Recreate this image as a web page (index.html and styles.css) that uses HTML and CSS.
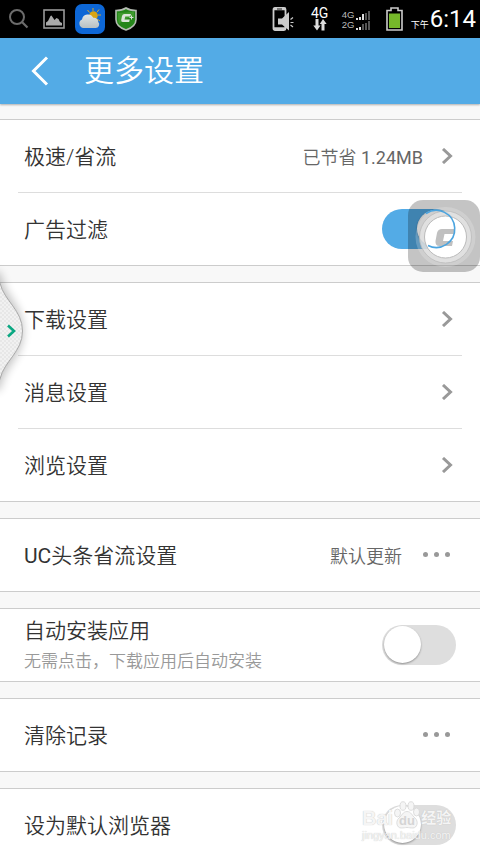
FILE: index.html
```html
<!DOCTYPE html>
<html lang="zh-CN">
<head>
    <meta charset="UTF-8">
    <meta name="viewport" content="width=device-width, initial-scale=1.0">
    <title>更多设置</title>
    <link rel="stylesheet" href="styles.css">
</head>
<body>
    <div class="status_bar">
        <div class="status_left">
            <svg class="icon_search" width="20" height="20" viewBox="0 0 20 20">
                <circle cx="8" cy="8" r="7" fill="none" stroke="#6c6c6c" stroke-width="2"/>
                <path d="M13 13l5.500 5.500" stroke="#6c6c6c" stroke-width="2.200"/>
            </svg>
            <svg class="icon_image" width="22" height="20" viewBox="0 0 22 20">
                <rect x="1" y="1" width="20" height="18" fill="none" stroke="#999" stroke-width="1.600"/>
                <path d="M3 16.500v-3l2-1.500 2.500-5 1-.5 3 4.500 2-2 2 1 1.500 3 2 1v2.500z" fill="#aaa"/>
            </svg>
            <svg class="icon_weather" width="30" height="30" viewBox="0 0 30 30">
                <defs>
                    <linearGradient id="cloud" x1="0" y1="0" x2="0" y2="1">
                        <stop offset="0" stop-color="#e0e6e6"/>
                        <stop offset="1" stop-color="#b8c0c2"/>
                    </linearGradient>
                </defs>
                <rect width="30" height="30" rx="7" fill="#0d67d6"/>
                <path d="M18 4v3M12.500 6l2 2.500M24 5.500l-1.800 2.500M23 11h3M22 15l3 2" stroke="#d9a52a" stroke-width="1"/>
                <circle cx="18.500" cy="11.500" r="4.300" fill="#d9a514"/>
                <path d="M8 24a4.500 4.500 0 0 1-1-8.500 6 6 0 0 1 11.300-1.700 4.200 4.200 0 0 1 5 4.200 3.600 3.600 0 0 1-2.800 6z" fill="url(#cloud)"/>
            </svg>
            <svg class="icon_shield" width="22" height="24" viewBox="0 0 22 24">
                <path d="M11 1c3 2 6 2.500 10 2.500v9c0 5-4 8.500-10 10.500-6-2-10-5.500-10-10.500v-9c4 0 7-.5 10-2.500z" fill="#25861a" stroke="#b5bcb3" stroke-width="1.600"/>
                <path d="M3 6c4 0 12-1 16-1v5c-6 0-11 3-15 7-1-3-1-7-1-11z" fill="#65b94c" opacity=".4"/>
                <path d="M16 7H9.500Q7.500 7 7 9l-.8 4q-.3 2 1.500 2h6.500l.6-2.500H9.500L10.300 9.500h5z" fill="#dbe4d9"/>
                <path d="M16.500 8.500v4M14.500 10.500h4" stroke="#d7e3d4" stroke-width="1"/>
            </svg>
        </div>
        <div class="status_right">
            <svg class="icon_mute" width="23" height="24" viewBox="0 0 23 24">
                <rect x="1.500" y="1" width="12" height="22" rx="1.500" fill="none" stroke="#ccc" stroke-width="1.800"/>
                <path d="M1.500 2h12M1.500 21.500h12" stroke="#ccc" stroke-width="2.500"/>
                <path d="M5 2h5" stroke="#222" stroke-width="1"/>
                <path d="M6 11.500h4l7-6.500v18.500l-7-6H6z" fill="#ccc"/>
                <path d="M18.500 12.500l2.500-2M18.500 15.500h3M18.500 18l2.500 2" stroke="#ccc" stroke-width="1.200"/>
            </svg>
            <div class="network">
                <span>4G</span>
                <svg width="14" height="12" viewBox="0 0 14 12">
                    <path d="M2.500 0h3v6.500h2L4 11.500.3 6.500h2.200zM8.500 11.500h3V5h2.200L10 0 6.800 5h1.700z" fill="#ddd"/>
                </svg>
            </div>
            <div class="signals">
                <div class="signal">
                    <span>4G</span>
                    <svg width="14" height="9" viewBox="0 0 14 9">
                        <path d="M0 7h2v2H0zM3 6h2v3H3zM6 3h2v6H6z" fill="#ddd"/>
                        <path d="M9 2h2v7H9zM12 0h2v9h-2z" fill="#555"/>
                    </svg>
                </div>
                <div class="signal">
                    <span>2G</span>
                    <svg width="14" height="9" viewBox="0 0 14 9">
                        <path d="M0 7h2v2H0zM3 6h2v3H3z" fill="#ddd"/>
                        <path d="M6 3h2v6H6zM9 2h2v7H9zM12 0h2v9h-2z" fill="#555"/>
                    </svg>
                </div>
            </div>
            <svg class="icon_battery" width="17" height="24" viewBox="0 0 17 24">
                <path d="M5 3.500V1h7v2.500h4V23H1V3.500z" fill="#000" stroke="#ccc" stroke-width="1.600"/>
                <rect x="3" y="6.500" width="11" height="14.500" fill="#76b82a"/>
            </svg>
            <span class="period">下午</span>
            <span class="clock">6:14</span>
        </div>
    </div>

    <header class="header">
        <svg width="18" height="30" viewBox="0 0 18 30">
            <path d="M16 1.500L2.500 15 16 28.500" fill="none" stroke="#fff" stroke-width="3"/>
        </svg>
        <h1>更多设置</h1>
    </header>

    <main class="settings">
        <section class="group">
            <div class="row">
                <span class="label">极速/省流</span>
                <span class="value">已节省 <span class="latin">1.24MB</span></span>
                <svg class="arrow" width="12" height="16" viewBox="0 0 12 16"><path d="M2 1l7.500 7L2 15"/></svg>
            </div>
            <div class="row">
                <span class="label">广告过滤</span>
                <span class="switch on"></span>
            </div>
        </section>
        <section class="group">
            <div class="row">
                <span class="label">下载设置</span>
                <svg class="arrow" width="12" height="16" viewBox="0 0 12 16"><path d="M2 1l7.500 7L2 15"/></svg>
            </div>
            <div class="row">
                <span class="label">消息设置</span>
                <svg class="arrow" width="12" height="16" viewBox="0 0 12 16"><path d="M2 1l7.500 7L2 15"/></svg>
            </div>
            <div class="row">
                <span class="label">浏览设置</span>
                <svg class="arrow" width="12" height="16" viewBox="0 0 12 16"><path d="M2 1l7.500 7L2 15"/></svg>
            </div>
        </section>
        <section class="group">
            <div class="row">
                <span class="label"><span class="latin">UC</span>头条省流设置</span>
                <span class="value">默认更新</span>
                <span class="dots"><i></i><i></i><i></i></span>
            </div>
        </section>
        <section class="group">
            <div class="row">
                <div class="label">
                    <p>自动安装应用</p>
                    <p class="hint">无需点击，下载应用后自动安装</p>
                </div>
                <span class="switch"></span>
            </div>
        </section>
        <section class="group">
            <div class="row">
                <span class="label">清除记录</span>
                <span class="dots"><i></i><i></i><i></i></span>
            </div>
        </section>
        <section class="group">
            <div class="row">
                <span class="label">设为默认浏览器</span>
                <span class="switch"></span>
            </div>
        </section>
    </main>

    <!-- side drawer handle -->
    <svg class="drawer" width="48" height="150" viewBox="0 0 48 150">
        <defs>
            <pattern id="weave" width="4" height="4" patternUnits="userSpaceOnUse">
                <rect width="4" height="4" fill="#f1f1f1"/>
                <path d="M0 0h2v2H0zM2 2h2v2H2z" fill="#e7e7e7"/>
            </pattern>
            <filter id="soft" x="-50%" y="-20%" width="200%" height="140%">
                <feGaussianBlur stdDeviation="5"/>
            </filter>
        </defs>
        <path d="M-10 12H0C3 36 23 44 23 71S3 106 0 130h-10z" fill="#000" opacity=".24" filter="url(#soft)"/>
        <path d="M-2 18L0 23C4 41 22.500 50 22.500 71S4 101 0 119l-2 5z" fill="url(#weave)" stroke="#aaa" stroke-width="1"/>
        <path d="M8 65.500l6 5.500-6 5.500" fill="none" stroke="#0aa882" stroke-width="2.600"/>
    </svg>

    <!-- floating assistant button -->
    <svg class="float_ball" width="72" height="72" viewBox="0 0 72 72">
        <rect width="72" height="72" rx="15" fill="#000" opacity=".23"/>
        <circle cx="37.500" cy="37" r="30" fill="#fff" opacity=".2"/>
        <circle cx="37.500" cy="37" r="26" fill="#e4e4e4" fill-opacity=".8" stroke="#bbb" stroke-width=".8"/>
        <circle cx="37.500" cy="37" r="21" fill="#fff" stroke="#bbb" stroke-width="1"/>
        <path d="M47 29H34q-4 0-5 4l-1.500 8q-.5 5 4 5H44l1-5H35l1.500-7H46z" fill="#c0c0c0"/>
        <path d="M18 13.500A18.500 18.500 0 1 1 20 45.500" fill="none" stroke="#4ba4df" stroke-width="1.600"/>
    </svg>

    <div class="watermark">
        <div class="mark_name">
            <span>Bai</span>
            <svg width="28" height="28" viewBox="0 0 28 28">
                <g fill="#f5f5f5" stroke="#d5d5d5" stroke-width=".8">
                    <ellipse cx="4.500" cy="12" rx="3" ry="4"/>
                    <ellipse cx="10" cy="5" rx="3" ry="4.300"/>
                    <ellipse cx="18" cy="5" rx="3" ry="4.300"/>
                    <ellipse cx="23.500" cy="11" rx="3" ry="4"/>
                    <path d="M14 10.500c4 0 5 4 8 6.500 4 3.500 2 10-2 10-3 0-4-.5-6-.5s-3 .5-6 .5c-4 0-6-6.500-2-10C9 14.500 10 10.500 14 10.500z"/>
                </g>
                <text x="14" y="24" text-anchor="middle">du</text>
            </svg>
            <span class="mark_cn">经验</span>
        </div>
        <div class="mark_url">jingyan.baidu.com</div>
    </div>
</body>
</html>
```
FILE: styles.css
```css
* {
    margin: 0;
    padding: 0;
    box-sizing: border-box;
}
body {
    position: relative;
    width: 480px;
    height: 854px;
    overflow: hidden;
    background: #f8f8f8;
    color: #333;
    font-family: Roboto, "Noto Sans CJK SC", sans-serif;
}
svg {
    display: block;
    flex-shrink: 0;
}
.status_bar {
    display: flex;
    justify-content: space-between;
    height: 38px;
    padding: 0 5px 0 9px;
    background: #000;
    color: #fff;
}
.status_left, .status_right {
    display: flex;
    align-items: center;
}
.icon_image {
    margin-left: 14px;
}
.icon_weather {
    margin-left: 10px;
}
.icon_shield {
    margin-left: 10px;
}
.network {
    display: flex;
    flex-direction: column;
    align-items: center;
    width: 20px;
    margin-left: 15px;
    font-size: 14px;
    line-height: 12px;
}
.signals {
    margin-left: 12px;
    margin-right: -1px;
    margin-top: 2px;
    font-family: "Liberation Sans", sans-serif;
    font-size: 9.5px;
    line-height: 10px;
    color: #bbb;
}
.signal {
    display: flex;
    align-items: center;
}
.signal span {
    width: 14px;
}
.icon_battery {
    margin-left: 17px;
}
.period {
    margin: 10px 1px 0 8px;
    font-size: 9px;
}
.clock {
    font-size: 24px;
    line-height: 38px;
    margin-right: -1px;
}
.header {
    display: flex;
    align-items: center;
    height: 66px;
    padding-left: 31px;
    background: #53abe6;
    box-shadow: 0 1px 2px rgba(0, 0, 0, 0.3);
    color: #fff;
}
.header h1 {
    margin-left: 35px;
    font-size: 30px;
    font-weight: 350;
    line-height: 60px;
}
.settings {
    padding-top: 15px;
}
.group {
    margin-bottom: 16px;
    padding: 0 18px;
    background: #fff;
    border-top: 1px solid #ccc;
    border-bottom: 1px solid #ccc;
}
.row {
    display: flex;
    align-items: center;
    height: 72px;
    padding: 0 6px;
}
.row + .row {
    height: 73px;
    border-top: 1px solid #ddd;
}
.label {
    flex: 1;
    padding-top: 1px;
    font-size: 21px;
    font-weight: 350;
    line-height: 30px;
}
.hint {
    font-size: 17px;
    color: #999;
}
.value {
    font-size: 18px;
    font-weight: 350;
    color: #666;
}
.latin {
    font-weight: 400;
}
.arrow {
    margin-left: 18px;
    margin-right: 3px;
    fill: none;
    stroke: #999;
    stroke-width: 3;
}
.dots {
    display: flex;
    gap: 6px;
    margin-left: 21px;
    margin-right: 6px;
    margin-bottom: 2px;
}
.dots i {
    width: 5px;
    height: 5px;
    border-radius: 50%;
    background: #999;
}
.switch {
    display: flex;
    width: 74px;
    height: 40px;
    padding: 1px 2px;
    border-radius: 20px;
    background: #dedede;
}
.switch::before {
    content: "";
    width: 37px;
    height: 37px;
    border-radius: 50%;
    background: #fff;
    box-shadow: 0 1px 2px rgba(0, 0, 0, 0.35);
}
.switch.on {
    justify-content: flex-end;
    background: #53abe6;
}
.drawer {
    position: absolute;
    left: 0;
    top: 260px;
}
.float_ball {
    position: absolute;
    left: 408px;
    top: 200px;
}
.watermark {
    position: absolute;
    left: 362px;
    top: 800px;
    color: #f5f5f5;
    text-shadow: 0 0 1px #bbb;
    font-family: "Liberation Sans", "Noto Sans CJK SC", sans-serif;
}
.mark_name {
    display: flex;
    align-items: flex-end;
    height: 29px;
    font-size: 20px;
    font-weight: bold;
    line-height: 22px;
}
.mark_name text {
    font-size: 13px;
    fill: #d4d4d4;
    text-shadow: none;
}
.mark_name .mark_cn {
    font-size: 15px;
}
.mark_url {
    font-size: 11px;
    line-height: 13px;
}
```
